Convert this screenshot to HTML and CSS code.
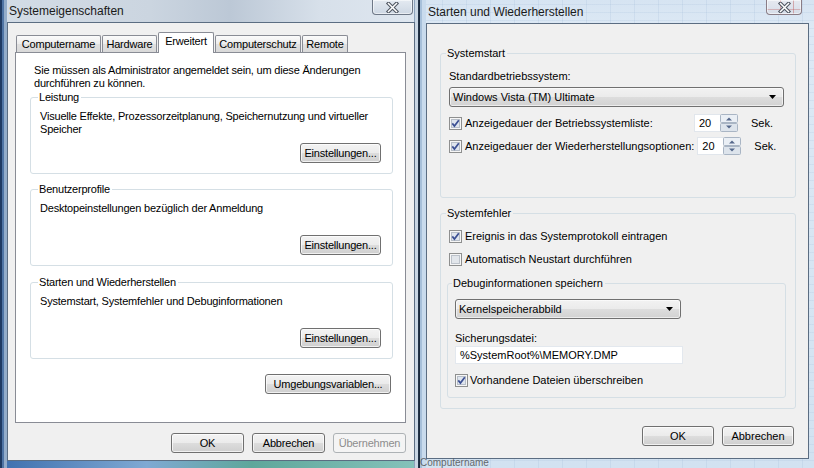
FILE: index.html
```html
<!DOCTYPE html>
<html lang="de">
<head>
<meta charset="utf-8">
<title>Systemeigenschaften</title>
<link rel="stylesheet" href="styles.css">
</head>
<body>
<div class="desktop">

  <section class="win win-sys">
    <header class="titlebar">
      <span class="title">Systemeigenschaften</span>
      <span class="close close-sys">
        <svg width="15" height="11" viewBox="0 0 15 11"><path d="M3.5 1.5 L11.5 9.5 M11.5 1.5 L3.5 9.5" stroke="#4f5661" stroke-width="3.6" stroke-linecap="square"/><path d="M3.5 1.5 L11.5 9.5 M11.5 1.5 L3.5 9.5" stroke="#fff" stroke-width="1.5" stroke-linecap="square"/></svg>
      </span>
    </header>
    <div class="client">
      <nav class="tabs">
        <span class="tab tab-name">Computername</span>
        <span class="tab tab-hw">Hardware</span>
        <span class="tab tab-adv tab-active">Erweitert</span>
        <span class="tab tab-prot">Computerschutz</span>
        <span class="tab tab-remote">Remote</span>
      </nav>
      <div class="tabpanel">
        <p class="note">Sie müssen als Administrator angemeldet sein, um diese Änderungen<br>durchführen zu können.</p>
        <div class="group pgroup pgroup-first">
          <span class="glabel">Leistung</span>
          <p class="gtext">Visuelle Effekte, Prozessorzeitplanung, Speichernutzung und virtueller<br>Speicher</p>
          <button class="btn btn-set">Einstellungen...</button>
        </div>
        <div class="group pgroup pgroup-profiles">
          <span class="glabel">Benutzerprofile</span>
          <p class="gtext">Desktopeinstellungen bezüglich der Anmeldung</p>
          <button class="btn btn-set">Einstellungen...</button>
        </div>
        <div class="group pgroup pgroup-start">
          <span class="glabel">Starten und Wiederherstellen</span>
          <p class="gtext">Systemstart, Systemfehler und Debuginformationen</p>
          <button class="btn btn-set">Einstellungen...</button>
        </div>
        <button class="btn btn-env">Umgebungsvariablen...</button>
      </div>
      <div class="dlg-buttons">
        <button class="btn btn-dlg">OK</button>
        <button class="btn btn-dlg">Abbrechen</button>
        <button class="btn btn-dlg" disabled>Übernehmen</button>
      </div>
    </div>
  </section>

  <section class="win win-boot">
    <header class="titlebar">
      <span class="title">Starten und Wiederherstellen</span>
      <span class="close close-boot">
        <svg width="15" height="11" viewBox="0 0 15 11"><path d="M3.5 1.5 L11.5 9.5 M11.5 1.5 L3.5 9.5" stroke="#4f5661" stroke-width="3.6" stroke-linecap="square"/><path d="M3.5 1.5 L11.5 9.5 M11.5 1.5 L3.5 9.5" stroke="#fff" stroke-width="1.5" stroke-linecap="square"/></svg>
      </span>
    </header>
    <div class="client">
      <div class="group bgroup group-boot">
        <span class="glabel">Systemstart</span>
        <p class="field-label lbl-os">Standardbetriebssystem:</p>
        <div class="select select-os">
          <span>Windows Vista (TM) Ultimate</span>
          <svg width="7" height="4" viewBox="0 0 7 4"><path d="M0 0 H7 L3.5 4 Z" fill="#000"/></svg>
        </div>
        <div class="check-row spin-row row-list">
          <svg class="cb" width="13" height="13" viewBox="0 0 13 13"><rect x=".5" y=".5" width="12" height="12" fill="#f6f6f6" stroke="#8e8f8f"/><rect x="2.5" y="2.5" width="8" height="8" fill="#dfe5ee" stroke="#b7bec8"/><path d="M3.3 6.4 L5.4 9 L9.8 3.2" fill="none" stroke="#3b4f93" stroke-width="1.7"/></svg>
          <span class="clabel">Anzeigedauer der Betriebssystemliste:</span>
          <span class="spin"><span class="spin-value">20</span><svg width="18" height="18" viewBox="0 0 18 18"><rect x=".5" y=".5" width="17" height="8" rx="1" fill="#eaeff5" stroke="#a9b5c4"/><rect x=".5" y="9.5" width="17" height="8" rx="1" fill="#dde4ec" stroke="#a9b5c4"/><path d="M6 6.5 L9 3.5 L12 6.5Z" fill="#56698c"/><path d="M6 11.5 L9 14.5 L12 11.5Z" fill="#56698c"/></svg></span>
          <span class="unit">Sek.</span>
        </div>
        <div class="check-row spin-row row-recovery">
          <svg class="cb" width="13" height="13" viewBox="0 0 13 13"><rect x=".5" y=".5" width="12" height="12" fill="#f6f6f6" stroke="#8e8f8f"/><rect x="2.5" y="2.5" width="8" height="8" fill="#dfe5ee" stroke="#b7bec8"/><path d="M3.3 6.4 L5.4 9 L9.8 3.2" fill="none" stroke="#3b4f93" stroke-width="1.7"/></svg>
          <span class="clabel">Anzeigedauer der Wiederherstellungsoptionen:</span>
          <span class="spin"><span class="spin-value">20</span><svg width="18" height="18" viewBox="0 0 18 18"><rect x=".5" y=".5" width="17" height="8" rx="1" fill="#eaeff5" stroke="#a9b5c4"/><rect x=".5" y="9.5" width="17" height="8" rx="1" fill="#dde4ec" stroke="#a9b5c4"/><path d="M6 6.5 L9 3.5 L12 6.5Z" fill="#56698c"/><path d="M6 11.5 L9 14.5 L12 11.5Z" fill="#56698c"/></svg></span>
          <span class="unit">Sek.</span>
        </div>
      </div>

      <div class="group bgroup group-err">
        <span class="glabel">Systemfehler</span>
        <div class="check-row row-event">
          <svg class="cb" width="13" height="13" viewBox="0 0 13 13"><rect x=".5" y=".5" width="12" height="12" fill="#f6f6f6" stroke="#8e8f8f"/><rect x="2.5" y="2.5" width="8" height="8" fill="#dfe5ee" stroke="#b7bec8"/><path d="M3.3 6.4 L5.4 9 L9.8 3.2" fill="none" stroke="#3b4f93" stroke-width="1.7"/></svg>
          <span class="clabel">Ereignis in das Systemprotokoll eintragen</span>
        </div>
        <div class="check-row row-restart">
          <svg class="cb" width="13" height="13" viewBox="0 0 13 13"><rect x=".5" y=".5" width="12" height="12" fill="#f6f6f6" stroke="#8e8f8f"/><rect x="2.5" y="2.5" width="8" height="8" fill="#e2e6eb" stroke="#bcc2ca"/></svg>
          <span class="clabel">Automatisch Neustart durchführen</span>
        </div>
        <div class="group bgroup group-debug">
          <span class="glabel">Debuginformationen speichern</span>
          <div class="select select-dump">
            <span>Kernelspeicherabbild</span>
            <svg width="7" height="4" viewBox="0 0 7 4"><path d="M0 0 H7 L3.5 4 Z" fill="#000"/></svg>
          </div>
          <p class="field-label lbl-file">Sicherungsdatei:</p>
          <div class="textbox">%SystemRoot%\MEMORY.DMP</div>
          <div class="check-row row-overwrite">
            <svg class="cb" width="13" height="13" viewBox="0 0 13 13"><rect x=".5" y=".5" width="12" height="12" fill="#f6f6f6" stroke="#8e8f8f"/><rect x="2.5" y="2.5" width="8" height="8" fill="#dfe5ee" stroke="#b7bec8"/><path d="M3.3 6.4 L5.4 9 L9.8 3.2" fill="none" stroke="#3b4f93" stroke-width="1.7"/></svg>
            <span class="clabel">Vorhandene Dateien überschreiben</span>
          </div>
        </div>
      </div>

      <div class="dlg-buttons">
        <button class="btn btn-dlg">OK</button>
        <button class="btn btn-dlg">Abbrechen</button>
      </div>
    </div>
  </section>

  <span class="behind-text">Computername</span>
</div>
</body>
</html>
```

FILE: styles.css
```css
html, body {
  margin: 0;
  padding: 0;
  overflow: hidden;
}

body {
  width: 814px;
  height: 468px;
  background: #b8cde2;
  font-family: "Liberation Sans", Arial, sans-serif;
  color: #000;
}

.desktop {
  position: relative;
  width: 814px;
  height: 468px;
  overflow: hidden;
}

p { margin: 0; }

/* ---------- windows ---------- */
.win {
  position: absolute;
  top: 0;
  height: 468px;
  box-sizing: border-box;
  display: flex;
  flex-direction: column;
}

.win-sys {
  left: 0;
  width: 419px;
  padding: 0 5px 8px 8px;
  background:
    linear-gradient(to right, #1f3a62 0 2px, #4f74a4 2px 4px, #93acc9 4px 7px, transparent 7px) left top / 8px 100% no-repeat,
    linear-gradient(to right, transparent 0 414px, #8ea4bd 414px 415px, #c9d6e3 415px 418px, #223247 418px) left top / 100% 100% no-repeat,
    linear-gradient(to right, #3e6fae 0, #7fa9d3 35%, #5ea79b 60%, #86c3bb 100%) left bottom / 100% 8px no-repeat,
    linear-gradient(to right, #d3dce6 0, #cbd5e0 150px, #bcc8d6 230px, #d7e0ea 320px, #dfe7f0 100%);
  z-index: 1;
}

.win-boot {
  left: 419px;
  width: 395px;
  padding: 0 6px 10px 8px;
  background:
    linear-gradient(to right, #1b2a3c 0 1px, #a7c0da 1px 3px, #c9dbed 3px 7px, transparent 7px) left top / 8px 100% no-repeat,
    repeating-linear-gradient(90deg, transparent 0 23px, rgba(140, 170, 205, .16) 23px 24px),
    repeating-linear-gradient(0deg, transparent 0 7px, rgba(140, 170, 205, .14) 7px 8px),
    linear-gradient(#d6e4f2, #dde9f5 30px, #d2e2f1);
  z-index: 2;
}

.titlebar {
  display: flex;
  justify-content: space-between;
  align-items: flex-start;
  flex: none;
  font-size: 12px;
  line-height: 15px;
  color: #1a1a1a;
}

.win-sys .titlebar { height: 23px; padding: 0 1px; }
.win-boot .titlebar { height: 24px; padding: 0 6px 0 1px; }

.win-sys .title { padding-top: 4px; }
.win-boot .title { padding-top: 5px; }

.close {
  display: flex;
  align-items: center;
  justify-content: center;
  height: 15px;
  box-sizing: border-box;
  border: 1px solid #6e7887;
  border-top: none;
  border-radius: 0 0 4px 4px;
  background: linear-gradient(#e4eaf1, #cdd7e3);
  box-shadow: inset 0 0 0 1px rgba(255,255,255,.55);
}

.close-sys { width: 41px; }

.close-boot {
  width: 36px;
  background:
    linear-gradient(to right, transparent 0 13px, rgba(190, 90, 90, .45) 13px 14px, transparent 14px 26px, rgba(190, 90, 90, .45) 26px 27px, transparent 27px),
    linear-gradient(transparent 0 9px, rgba(190, 90, 90, .35) 9px 10px, transparent 10px),
    linear-gradient(#e6e9f0, #d6dde8);
  border-color: #8a7d86;
}

.client {
  flex: 1;
  display: flex;
  flex-direction: column;
  background: #f0f0f0;
  box-shadow: 0 0 0 1px #5b6d82;
  font-size: 11px;
  line-height: 13px;
}

.win-sys .client {
  padding: 9px 8px 7px 7px;
  letter-spacing: -0.2px;
}

.win-boot .client {
  padding: 29px 12px 0 13px;
}

/* ---------- tabs ---------- */
.tabs {
  display: flex;
  align-items: flex-end;
  height: 20px;
  padding-left: 1px;
  position: relative;
  z-index: 1;
}

.tab {
  box-sizing: border-box;
  height: 17px;
  border: 1px solid #898c95;
  border-bottom: none;
  border-radius: 2px 2px 0 0;
  background: linear-gradient(#fbfbfb, #ececec 50%, #e0e0e0 51%, #d9d9d9);
  text-align: center;
  line-height: 16px;
  margin-right: 1px;
}

.tab-name { width: 85px; }
.tab-hw { width: 55px; }
.tab-adv { width: 56px; }
.tab-prot { width: 86px; }
.tab-remote { width: 46px; }

.tab-active {
  height: 21px;
  margin-bottom: -1px;
  background: #fff;
  line-height: 17px;
}

.tabpanel {
  box-sizing: border-box;
  height: 371px;
  border: 1px solid #898c95;
  background: #fff;
  padding: 11px 12px 0 14px;
  display: flex;
  flex-direction: column;
}

.note { margin-left: 4px; }

/* ---------- group boxes ---------- */
.group {
  box-sizing: border-box;
  border: 1px solid #d5dfe5;
  border-radius: 3px;
  display: flex;
  flex-direction: column;
  align-items: stretch;
}

.glabel {
  align-self: flex-start;
  margin: -7px 0 0 -2px;
  padding: 0 2px 0 1px;
  background: #fff;
}

.bgroup .glabel { background: #f0f0f0; margin-left: -3px; }

.pgroup {
  height: 77px;
  padding: 0 11px 10px 9px;
}

.pgroup-first { margin-top: 7px; }
.pgroup-profiles { margin-top: 15px; }
.pgroup-start { margin-top: 16px; }

.gtext { margin-top: 6px; }

/* ---------- buttons ---------- */
.btn {
  box-sizing: border-box;
  height: 20px;
  padding: 0;
  font: inherit;
  letter-spacing: inherit;
  line-height: 17px;
  color: #000;
  border: 1px solid #707070;
  border-radius: 3px;
  background: linear-gradient(#f3f3f3 0, #ebebeb 50%, #dddddd 50%, #cfcfcf 100%);
  box-shadow: inset 0 0 0 1px rgba(255,255,255,.7);
  text-align: center;
}

.btn:disabled {
  color: #8d8d8d;
  border-color: #adb2b5;
  background: #f4f4f4;
  box-shadow: none;
}

.btn-set {
  margin-top: auto;
  align-self: flex-end;
  width: 81px;
}

.btn-env {
  margin-top: 15px;
  align-self: flex-end;
  width: 126px;
  margin-right: 2px;
}

.dlg-buttons {
  display: flex;
  justify-content: flex-end;
  gap: 8px;
  margin-top: 10px;
}

.btn-dlg { width: 73px; }

.win-boot .dlg-buttons {
  margin-top: 17px;
  margin-right: 2px;
}

.win-boot .btn-dlg { width: 72px; }

/* ---------- right dialog ---------- */
.bgroup { padding: 0 11px 0 8px; }

.group-boot { height: 145px; }
.group-err { height: 196px; margin-top: 15px; }

.group-debug {
  height: 115px;
  margin: 15px -2px 0 -2px;
  padding: 0 0 0 7px;
}

.lbl-os { margin-top: 10px; }

.select {
  box-sizing: border-box;
  height: 20px;
  border: 1px solid #707070;
  border-radius: 3px;
  background: linear-gradient(#f2f2f2 0, #ebebeb 50%, #dddddd 50%, #d2d2d2 100%);
  box-shadow: inset 0 0 0 1px rgba(255,255,255,.6);
  display: flex;
  align-items: center;
  justify-content: space-between;
  padding: 0 7px 0 3px;
}

.select-os { margin-top: 4px; }
.select-dump { margin-top: 9px; width: 226px; }

.check-row {
  display: flex;
  align-items: center;
  height: 17px;
  gap: 3px;
}

.spin-row { height: 18px; }
.row-list { margin-top: 7px; }
.row-recovery { margin-top: 5px; }
.row-event { margin-top: 8px; }
.row-restart { margin-top: 6px; }
.row-overwrite { margin-top: 8px; gap: 2px; }

.cb { flex: none; display: block; }

.clabel { flex: 1; white-space: nowrap; }

.spin {
  display: flex;
  flex: none;
}

.spin-value {
  box-sizing: border-box;
  width: 26px;
  height: 18px;
  background: #fff;
  border: 1px solid #e1e6ec;
  border-right: none;
  padding-left: 4px;
  line-height: 16px;
}

.spin svg { display: block; }

.unit {
  flex: none;
  width: 33px;
  margin-left: 10px;
  box-sizing: border-box;
}

.lbl-file { margin-top: 13px; }

.textbox {
  box-sizing: border-box;
  margin-top: 1px;
  width: 228px;
  height: 18px;
  background: #fff;
  border: 1px solid #e3e8ee;
  padding-left: 4px;
  line-height: 16px;
}

/* text of a window behind, showing through the glass frame */
.behind-text {
  position: absolute;
  left: 420px;
  top: 458px;
  font-size: 10px;
  line-height: 10px;
  color: #333;
  z-index: 3;
  opacity: .7;
}
```
